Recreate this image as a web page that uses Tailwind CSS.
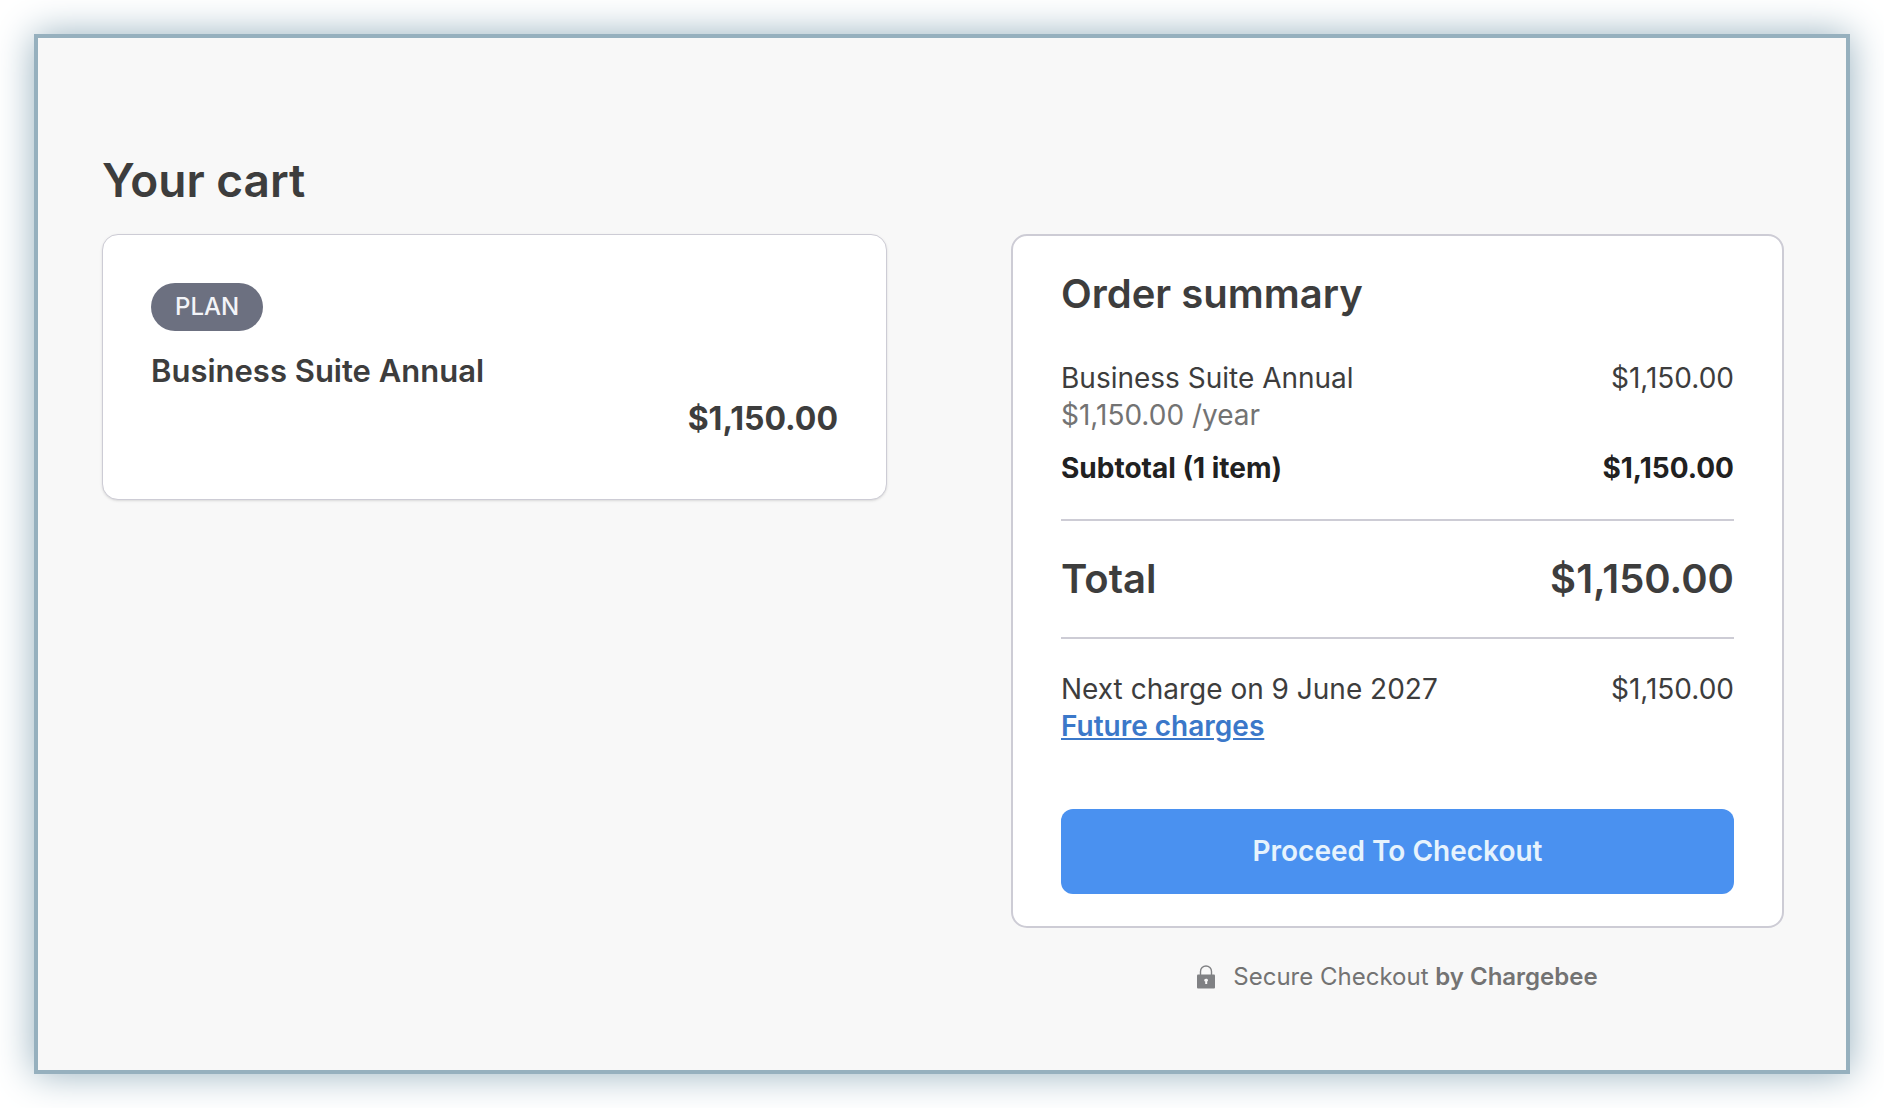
<!DOCTYPE html>
<html lang="en">
<head>
    <meta charset="UTF-8">
    <meta name="viewport" content="width=device-width, initial-scale=1.0">
    <title>Your cart</title>
    <script src="https://cdn.jsdelivr.net/npm/@tailwindcss/browser@4"></script>
</head>
<body class="bg-white font-['Inter',sans-serif] text-[#3d3d3d] flow-root">
    <div class="m-[34px] min-h-[calc(100vh-68px)] border-4 border-[#96b0be] bg-[#f8f8f8] shadow-[0_0_36px_#96b0be] pt-28 pb-16 pl-16 pr-[62px]">
        <h1 class="text-[46px] leading-[60px] font-semibold mb-6">Your cart</h1>

        <main class="grid grid-cols-[785fr_773fr] gap-[124px] items-start">
            <!-- Cart item -->
            <section class="bg-white border border-[#cdccd5] rounded-2xl shadow-sm px-12 pt-12 pb-14">
                <span class="inline-flex items-center h-12 px-6 rounded-full bg-[#6c7080] text-[#f3f4f8] text-2xl font-medium align-top">PLAN</span>
                <h2 class="mt-4 text-[31px] leading-12 font-semibold">Business Suite Annual</h2>
                <p class="text-[32px] leading-12 font-bold text-right">$1,150.00</p>
            </section>

            <div>
                <!-- Order summary -->
                <section class="bg-white border-2 border-[#cdccd5] rounded-2xl px-12 py-8 text-[28px] leading-[37px]">
                    <h2 class="text-[40px] leading-[52px] font-semibold mb-10">Order summary</h2>
                    <div class="flex justify-between">
                        <div>
                            <p>Business Suite Annual</p>
                            <p class="text-[#737373]">$1,150.00 /year</p>
                        </div>
                        <p>$1,150.00</p>
                    </div>
                    <div class="flex justify-between mt-4 font-bold text-[#212121]">
                        <p>Subtotal (1 item)</p>
                        <p>$1,150.00</p>
                    </div>
                    <div class="flex justify-between my-8 py-8 border-y-2 border-[#cdccd5] text-[40px] leading-[52px] font-semibold">
                        <p>Total</p>
                        <p>$1,150.00</p>
                    </div>
                    <div class="flex justify-between">
                        <div>
                            <p>Next charge on 9 June 2027</p>
                            <a href="#" class="block font-semibold text-[#3b78c9] underline">Future charges</a>
                        </div>
                        <p>$1,150.00</p>
                    </div>
                    <button type="button" class="mt-16 w-full py-6 rounded-xl bg-[#4a91f0] text-[#e6f3fd] font-semibold">Proceed To Checkout</button>
                </section>

                <!-- Secure checkout note -->
                <footer class="mt-8 flex items-center justify-center gap-[18px] text-2xl leading-[34px] text-[#737373]">
                    <svg class="w-[18px] h-6" viewBox="0 0 18 24" fill="none">
                        <path d="M3.5 10V6.5a5.5 5.5 0 0 1 11 0V10" stroke="#808184" stroke-width="1.4"/>
                        <rect y="9.5" width="18" height="14" rx="1" fill="#808184"/>
                        <path d="M7.2 15.4a1.9 1.6 0 1 1 3 1.2V19h-2v-2.4a1.6 1.6 0 0 1-1-1.2z" fill="#f8f8f8"/>
                    </svg>
                    <p>Secure Checkout <b class="font-semibold">by Chargebee</b></p>
                </footer>
            </div>
        </main>
    </div>
</body>
</html>
